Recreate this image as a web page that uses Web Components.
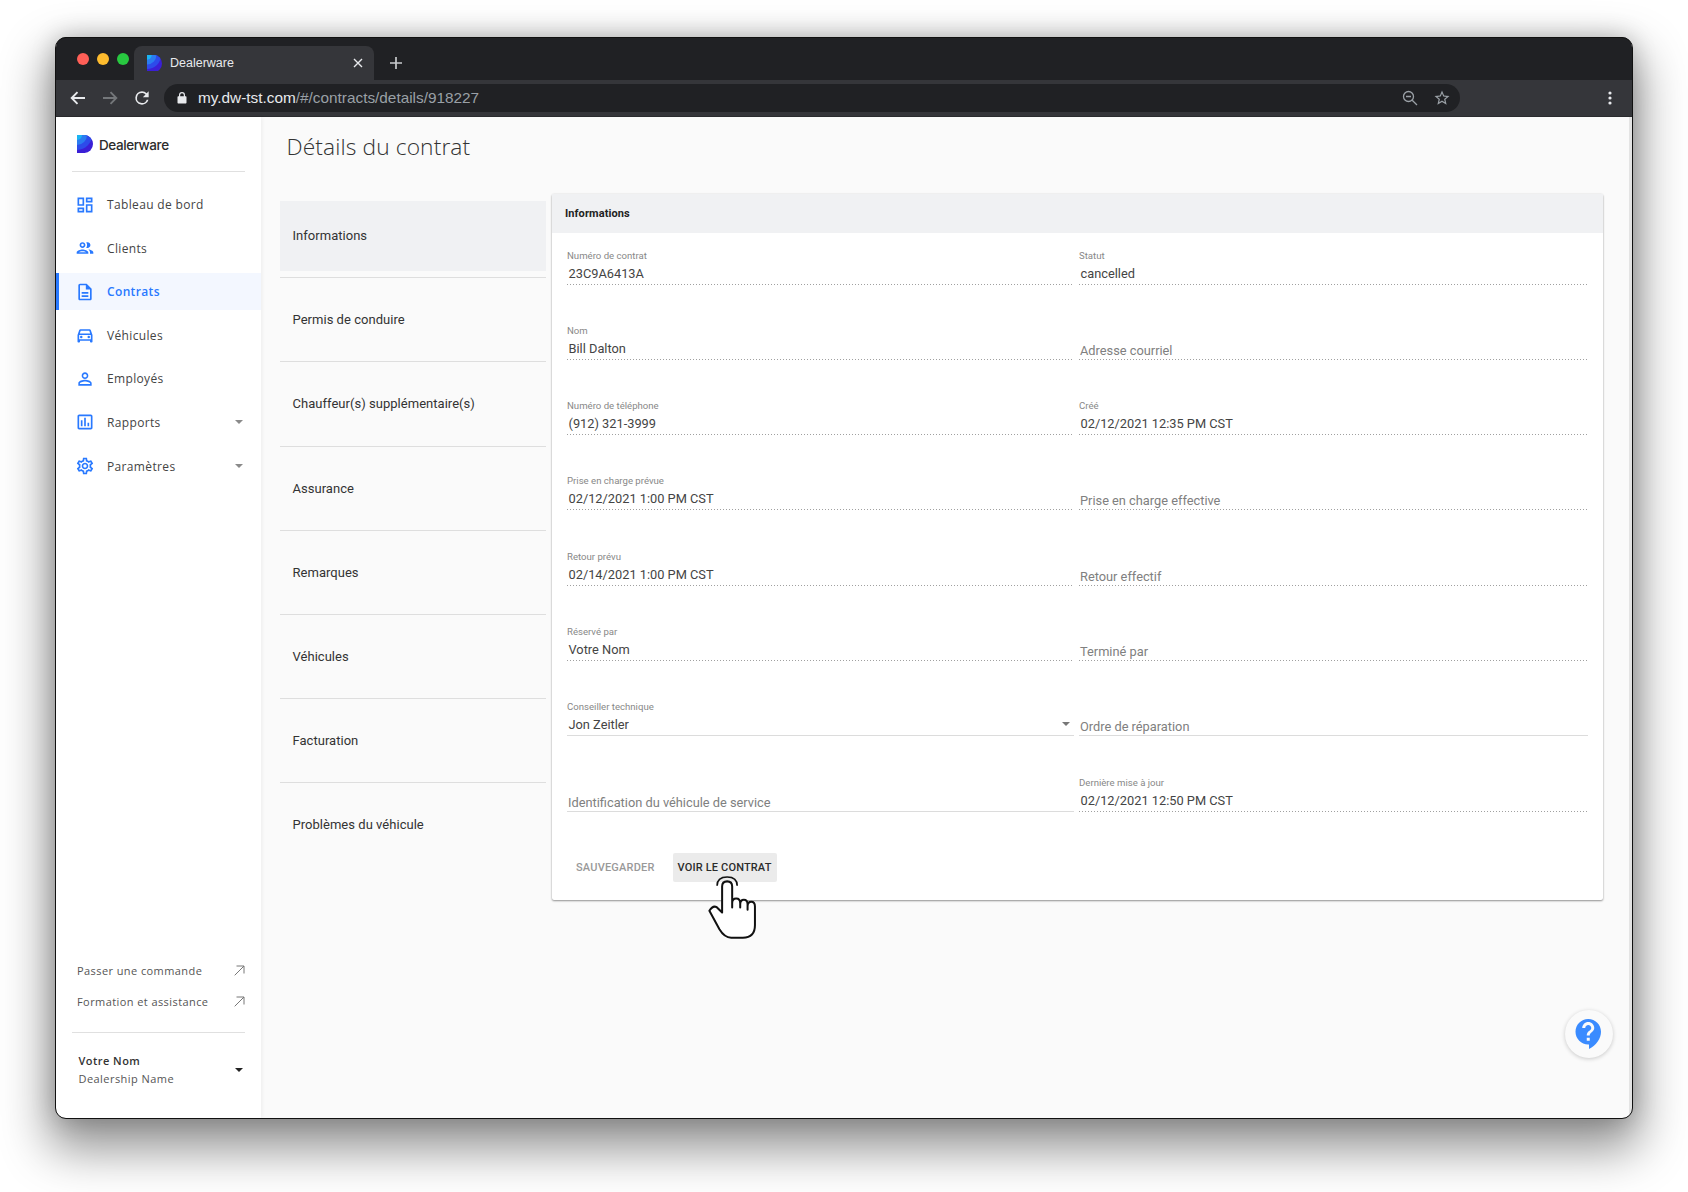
<!DOCTYPE html>
<html lang="fr">
<head>
<meta charset="utf-8">
<title>Dealerware</title>
<style>
  html, body { margin: 0; background: #fff; }
  body { width: 1688px; height: 1192px; overflow: hidden; font-family: Roboto, sans-serif; }
</style>
</head>
<body>
<browser-frame>
  <app-sidebar slot="side"></app-sidebar>
  <contract-page slot="main"></contract-page>
</browser-frame>

<script>
const ICONS = {
  dashboard: '<path d="M19 5v2h-4V5h4M9 5v6H5V5h4m10 8v6h-4v-6h4M9 17v2H5v-2h4M21 3h-8v6h8V3zM11 3H3v10h8V3zm10 8h-8v10h8V11zm-10 4H3v6h8v-6z"/>',
  people: '<path d="M9 13.75c-2.34 0-7 1.17-7 3.5V19h14v-1.75c0-2.33-4.66-3.5-7-3.5zM4.34 17c.84-.58 2.87-1.25 4.66-1.25s3.82.67 4.66 1.25H4.34zM9 12c1.93 0 3.5-1.57 3.5-3.5S10.93 5 9 5 5.5 6.57 5.5 8.5 7.07 12 9 12zm0-5c.83 0 1.5.67 1.5 1.5S9.83 10 9 10s-1.5-.67-1.5-1.5S8.17 7 9 7zm7.04 6.81c1.16.84 1.96 1.96 1.96 3.44V19h4v-1.75c0-2.02-3.5-3.17-5.96-3.44zM15 12c1.93 0 3.5-1.57 3.5-3.5S16.93 5 15 5c-.54 0-1.04.13-1.5.35.63.89 1 1.98 1 3.15s-.37 2.26-1 3.15c.46.22.96.35 1.5.35z"/>',
  doc: '<path d="M8 16h8v2H8zm0-4h8v2H8zm6-10H6c-1.1 0-2 .9-2 2v16c0 1.1.89 2 1.99 2H18c1.1 0 2-.9 2-2V8l-6-6zm4 18H6V4h7v5h5v11z"/>',
  car: '<path d="M18.92 6.01C18.72 5.42 18.16 5 17.5 5h-11c-.66 0-1.21.42-1.42 1.01L3 12v8c0 .55.45 1 1 1h1c.55 0 1-.45 1-1v-1h12v1c0 .55.45 1 1 1h1c.55 0 1-.45 1-1v-8l-2.08-5.99zM6.85 7h10.29l1.08 3.11H5.77L6.85 7zM19 17H5v-5h14v5z"/><circle cx="7.5" cy="14.5" r="1.5"/><circle cx="16.5" cy="14.5" r="1.5"/>',
  person: '<path d="M12 5.9c1.16 0 2.1.94 2.1 2.1s-.94 2.1-2.1 2.1S9.9 9.16 9.9 8s.94-2.1 2.1-2.1m0 9c2.97 0 6.1 1.46 6.1 2.1v1.1H5.9V17c0-.64 3.13-2.1 6.1-2.1M12 4C9.79 4 8 5.79 8 8s1.79 4 4 4 4-1.79 4-4-1.79-4-4-4zm0 9c-2.67 0-8 1.34-8 4v3h16v-3c0-2.66-5.33-4-8-4z"/>',
  chart: '<path d="M19 3H5c-1.1 0-2 .9-2 2v14c0 1.1.9 2 2 2h14c1.1 0 2-.9 2-2V5c0-1.1-.9-2-2-2zm0 16H5V5h14v14zM7 10h2v7H7zm4-3h2v10h-2zm4 6h2v4h-2z"/>',
  gear: '<path d="M19.43 12.98c.04-.32.07-.64.07-.98 0-.34-.03-.66-.07-.98l2.11-1.65c.19-.15.24-.42.12-.64l-2-3.46c-.09-.16-.26-.25-.44-.25-.06 0-.12.01-.17.03l-2.49 1c-.52-.4-1.08-.73-1.69-.98l-.38-2.65C14.46 2.18 14.25 2 14 2h-4c-.25 0-.46.18-.49.42l-.38 2.65c-.61.25-1.17.59-1.69.98l-2.49-1c-.06-.02-.12-.03-.18-.03-.17 0-.34.09-.43.25l-2 3.46c-.13.22-.07.49.12.64l2.11 1.65c-.04.32-.07.65-.07.98 0 .33.03.66.07.98l-2.11 1.65c-.19.15-.24.42-.12.64l2 3.46c.09.16.26.25.44.25.06 0 .12-.01.17-.03l2.49-1c.52.4 1.08.73 1.69.98l.38 2.65c.03.24.24.42.49.42h4c.25 0 .46-.18.49-.42l.38-2.65c.61-.25 1.17-.59 1.69-.98l2.49 1c.06.02.12.03.18.03.17 0 .34-.09.43-.25l2-3.46c.12-.22.07-.49-.12-.64l-2.11-1.65zm-1.98-1.71c.04.31.05.52.05.73 0 .21-.02.43-.05.73l-.14 1.13.89.7 1.08.84-.7 1.21-1.27-.51-1.04-.42-.9.68c-.43.32-.84.56-1.25.73l-1.06.43-.16 1.13-.2 1.35h-1.4l-.19-1.35-.16-1.13-1.06-.43c-.43-.18-.83-.41-1.23-.71l-.91-.7-1.06.43-1.27.51-.7-1.21 1.08-.84.89-.7-.14-1.13c-.03-.31-.05-.54-.05-.74s.02-.43.05-.73l.14-1.13-.89-.7-1.08-.84.7-1.21 1.27.51 1.04.42.9-.68c.43-.32.84-.56 1.25-.73l1.06-.43.16-1.13.2-1.35h1.39l.19 1.35.16 1.13 1.06.43c.43.18.83.41 1.23.71l.91.7 1.06-.43 1.27-.51.7 1.21-1.07.85-.89.7.14 1.13zM12 8c-2.21 0-4 1.79-4 4s1.79 4 4 4 4-1.79 4-4-1.79-4-4-4zm0 6c-1.1 0-2-.9-2-2s.9-2 2-2 2 .9 2 2-.9 2-2 2z"/>'
};

const logo = (id, size) => `
  <svg width="${size}" height="${size * 18 / 16}" viewBox="0 0 16 18">
    <defs><clipPath id="${id}"><path d="M0 0h7.5a8.5 9 0 0 1 0 18H0z"/></clipPath></defs>
    <g clip-path="url(#${id})">
      <rect width="16" height="18" fill="#3a1fd6"/>
      <circle cx="0" cy="0" r="15" fill="#2d4bea"/>
      <circle cx="0" cy="0" r="10" fill="#2b7cf0"/>
      <circle cx="0" cy="0" r="5" fill="#1bb4f2"/>
    </g>
  </svg>`;

class BrowserFrame extends HTMLElement {
  constructor() {
    super();
    this.attachShadow({ mode: "open" }).innerHTML = `
      <style>
        :host { display: block; box-sizing: border-box; width: 1688px; height: 1192px; padding: 37px 56px 74px; }
        .win { height: 100%; display: flex; flex-direction: column; border-radius: 10px; overflow: hidden; }
        .shadow { position: relative; height: 100%; border-radius: 10px; box-shadow: 0 24px 48px 8px rgba(0,0,0,.42), 0 0 24px rgba(0,0,0,.22); }
        .shadow::after { content: ""; position: absolute; inset: 0 -1px -1px -1px; border: 1px solid #111; border-radius: 11px; pointer-events: none; z-index: 5; }
        .strip { height: 43px; flex: none; background: #202124; display: flex; align-items: flex-end; padding-left: 21px; }
        .lights { display: flex; gap: 8px; align-self: flex-start; margin-top: 16px; }
        .lights i { width: 12px; height: 12px; border-radius: 50%; }
        .tab { position: relative; width: 240px; height: 34px; margin-left: 5px; background: #35363a; border-radius: 8px 8px 0 0;
               display: flex; align-items: center; padding-left: 13px; box-sizing: border-box; color: #e8eaed;
               font: 12.5px "Liberation Sans", sans-serif; }
        .tab span { margin-left: 8px; flex: 1; }
        .tab svg.x { margin-right: 11px; }
        .plus { margin: 0 0 10px 15px; }
        .bar { height: 37px; flex: none; background: #35363a; display: flex; align-items: center; box-sizing: border-box; border-bottom: 1px solid #2a2b2e; }
        .nav { width: 108px; display: flex; align-items: center; gap: 14px; padding-left: 13px; box-sizing: border-box; }
        .nav svg:last-child { margin-left: -1px; }
        .omni { width: 1296px; height: 28px; background: #202124; border-radius: 14px; display: flex; align-items: center;
                padding-left: 13px; box-sizing: border-box; font: 15.35px "Liberation Sans", sans-serif; color: #9aa0a6; }
        .omni b { font-weight: 400; color: #e8eaed; }
        .url { margin-left: 11px; flex: 1; }
        .omni svg.z { margin-right: 15px; }
        .omni svg.s { margin-right: 9px; }
        .dots { margin-left: 148px; }
        .body { flex: 1; min-height: 0; display: flex; background: #fafafa; position: relative; }
        ::slotted([slot=main]) { flex: 1; min-width: 0; }
      </style>
      <div class="shadow"><div class="win">
        <div class="strip">
          <div class="lights"><i style="background:#ff5f57"></i><i style="background:#febc2e"></i><i style="background:#28c840"></i></div>
          <div class="tab">
            ${logo("favclip", 15)}
            <span>Dealerware</span>
            <svg class="x" width="10" height="10" viewBox="0 0 10 10"><path d="M1 1l8 8M9 1l-8 8" stroke="#e8eaed" stroke-width="1.4"/></svg>
          </div>
          <svg class="plus" width="14" height="14" viewBox="0 0 14 14"><path d="M7 1v12M1 7h12" stroke="#c8cacd" stroke-width="1.7"/></svg>
        </div>
        <div class="bar">
          <div class="nav">
            <svg width="18" height="18" viewBox="0 0 18 18"><path d="M16 9H3M8.5 3.2L2.7 9l5.8 5.8" fill="none" stroke="#e8eaed" stroke-width="1.9"/></svg>
            <svg width="18" height="18" viewBox="0 0 18 18"><path d="M2 9h13M9.5 3.2L15.3 9l-5.8 5.8" fill="none" stroke="#74777a" stroke-width="1.9"/></svg>
            <svg width="20" height="20" viewBox="0 0 24 24"><path fill="#e8eaed" d="M17.65 6.35A7.96 7.96 0 0 0 12 4a8 8 0 1 0 7.73 10h-2.08A6 6 0 1 1 12 6c1.66 0 3.14.69 4.22 1.78L13 11h7V4l-2.35 2.35z"/></svg>
          </div>
          <div class="omni">
            <svg width="10" height="12" viewBox="0 0 10 12"><path fill="#e8eaed" d="M8.5 4.2H8V3a3 3 0 0 0-6 0v1.2h-.5C.9 4.2.5 4.6.5 5.2v5.3c0 .6.4 1 1 1h7c.6 0 1-.4 1-1V5.2c0-.6-.4-1-1-1zM3.2 4.2V3a1.8 1.8 0 0 1 3.6 0v1.2z"/></svg>
            <div class="url"><b>my.dw-tst.com</b>/#/contracts/details/918227</div>
            <svg class="z" width="16" height="16" viewBox="0 0 16 16"><circle cx="6.5" cy="6.5" r="5" fill="none" stroke="#9aa0a6" stroke-width="1.3"/><path d="M4 6.5h5M10.2 10.2L15 15" stroke="#9aa0a6" stroke-width="1.3"/></svg>
            <svg class="s" width="18" height="18" viewBox="0 0 24 24"><path fill="#9aa0a6" d="M22 9.24l-7.19-.62L12 2 9.19 8.63 2 9.24l5.46 4.73L5.82 21 12 17.27 18.18 21l-1.63-7.03L22 9.24zM12 15.4l-3.76 2.27 1-4.28-3.32-2.88 4.38-.38L12 6.1l1.71 4.04 4.38.38-3.32 2.88 1 4.28L12 15.4z"/></svg>
          </div>
          <svg class="dots" width="4" height="14" viewBox="0 0 4 14"><circle cx="2" cy="2" r="1.6" fill="#e8eaed"/><circle cx="2" cy="7" r="1.6" fill="#e8eaed"/><circle cx="2" cy="12" r="1.6" fill="#e8eaed"/></svg>
        </div>
        <div class="body"><slot name="side"></slot><slot name="main"></slot></div>
      </div></div>`;
  }
}
customElements.define("browser-frame", BrowserFrame);

class NavItem extends HTMLElement {
  constructor() {
    super();
    this.attachShadow({ mode: "open" });
  }
  connectedCallback() {
    const active = this.hasAttribute("active");
    this.shadowRoot.innerHTML = `
      <style>
        :host { display: flex; align-items: center; height: 37px; position: relative; box-sizing: border-box; padding-left: 18.5px;
                font: 12px "Open Sans", sans-serif; letter-spacing: .35px; color: ${active ? "#2979ff" : "#444"};
                background: ${active ? "#f3f7ff" : "transparent"}; font-weight: ${active ? 600 : 400}; }
        svg.i { width: 20px; height: 20px; fill: #2979ff; margin-right: 12.5px; flex: none; }
        .bar { position: absolute; left: 0; top: 0; bottom: 0; width: 3px; background: #2979ff; }
        .caret { margin-left: auto; margin-right: 18px; width: 0; height: 0; border: 4px solid transparent; border-top: 4px solid #8a8a8a; border-bottom: 0; }
      </style>
      ${active ? '<div class="bar"></div>' : ""}
      <svg class="i" viewBox="0 0 24 24">${ICONS[this.getAttribute("icon")]}</svg>
      <slot></slot>
      ${this.hasAttribute("caret") ? '<div class="caret"></div>' : ""}`;
  }
}
customElements.define("nav-item", NavItem);

class ExtLink extends HTMLElement {
  constructor() {
    super();
    this.attachShadow({ mode: "open" }).innerHTML = `
      <style>
        :host { display: flex; align-items: center; justify-content: space-between; height: 31px; padding: 0 16px 0 21px;
                font: 11px "Open Sans", sans-serif; letter-spacing: .42px; color: #555; }
      </style>
      <slot></slot>
      <svg width="11" height="11" viewBox="0 0 11 11"><path d="M.7 10.3L10 1M2.5 1H10v7.5" fill="none" stroke="#777" stroke-width="1"/></svg>`;
  }
}
customElements.define("ext-link", ExtLink);

class AppSidebar extends HTMLElement {
  constructor() {
    super();
    this.attachShadow({ mode: "open" }).innerHTML = `
      <style>
        :host { display: flex; flex-direction: column; flex: none; width: 205px; background: #fff; box-shadow: 1px 0 4px rgba(0,0,0,.06); z-index: 1; box-sizing: border-box; }
        .brand { height: 54px; margin: 0 16px; border-bottom: 1px solid #e0e0e0; display: flex; align-items: center; padding: 0 5px; gap: 6px; margin-bottom: 14px; }
        .brand span { font: 500 13.5px Inter, sans-serif; letter-spacing: -.42px; color: #2c2c2c; padding-top: 1px; }
        nav { display: flex; flex-direction: column; gap: 6.6px; }
        .foot { margin-top: auto; }
        hr { border: 0; border-top: 1px solid #e0e0e0; margin: 15px 16px 0; }
        .user { display: flex; align-items: flex-start; justify-content: space-between; padding: 19px 18px 0 22.5px; height: 85px; box-sizing: border-box;
                font: 11px/18px "Open Sans", sans-serif; letter-spacing: .45px; color: #555; }
        .user b { display: block; font-weight: 600; color: #333; }
        .user i { width: 0; height: 0; border: 4px solid transparent; border-top: 4px solid #222; border-bottom: 0; margin-top: 16px; }
      </style>
      <div class="brand">${logo("brandclip", 16)}<span>Dealerware</span></div>
      <nav>
        <nav-item icon="dashboard">Tableau de bord</nav-item>
        <nav-item icon="people">Clients</nav-item>
        <nav-item icon="doc" active>Contrats</nav-item>
        <nav-item icon="car">Véhicules</nav-item>
        <nav-item icon="person">Employés</nav-item>
        <nav-item icon="chart" caret>Rapports</nav-item>
        <nav-item icon="gear" caret>Paramètres</nav-item>
      </nav>
      <div class="foot">
        <ext-link>Passer une commande</ext-link>
        <ext-link>Formation et assistance</ext-link>
        <hr>
        <div class="user"><div><b>Votre Nom</b>Dealership Name</div><i></i></div>
      </div>`;
  }
}
customElements.define("app-sidebar", AppSidebar);

class SideTab extends HTMLElement {
  constructor() {
    super();
    this.attachShadow({ mode: "open" }).innerHTML = `
      <style>
        :host { display: block; height: 84.2px; box-sizing: border-box; font: 13px Roboto, sans-serif; letter-spacing: .03px; color: #333; }
        :host([first]) { height: 77.2px; }
        .in { height: 70px; box-sizing: border-box; display: flex; align-items: center; padding-left: 12.5px; }
        :host([first]) .in { padding-bottom: 2px; }
        :host(:not([first])) .in { height: 83.2px; }
        :host([selected]) .in { background: #f0f1f3; }
        .line { height: 1px; background: #dedede; }
        :host([first]) .line { margin-top: 6px; }
        :host([last]) .line { display: none; }
      </style>
      <div class="in"><slot></slot></div>
      <div class="line"></div>`;
  }
}
customElements.define("side-tab", SideTab);

class FormField extends HTMLElement {
  constructor() {
    super();
    this.attachShadow({ mode: "open" });
  }
  connectedCallback() {
    const label = this.getAttribute("label");
    const line = this.hasAttribute("solid")
      ? "border-bottom: 1px solid #dcdcdc;"
      : "padding-bottom: 1px; background: linear-gradient(90deg, #a0a0a0 1px, transparent 1px) left bottom / 3px 1px repeat-x;";
    this.shadowRoot.innerHTML = `
      <style>
        :host { display: flex; flex-direction: column; justify-content: flex-end; position: relative; box-sizing: border-box;
                ${line} font-family: Roboto, sans-serif; }
        .lab { font-size: 9.6px; line-height: 12px; color: #888; margin-bottom: 4px; }
        .val { font-size: 12.8px; line-height: 15px; color: #444; padding: 0 0 3px 1.5px; min-height: 15px; }
        .ph { font-size: 12.8px; line-height: 15px; color: #808080; padding: 0 0 1px 1px; }
        .car { position: absolute; right: 4px; bottom: 9px; width: 0; height: 0; border: 4px solid transparent; border-top: 4px solid #777; border-bottom: 0; }
      </style>
      ${label ? `<div class="lab">${label}</div><div class="val"><slot></slot></div>`
              : `<div class="ph">${this.getAttribute("placeholder")}</div>`}
      ${this.hasAttribute("select") ? '<div class="car"></div>' : ""}`;
  }
}
customElements.define("form-field", FormField);

class PointerHand extends HTMLElement {
  constructor() {
    super();
    this.attachShadow({ mode: "open" }).innerHTML = `
      <style>:host { position: absolute; left: 33px; top: 21px; width: 52px; height: 67px; display: block; z-index: 3; }</style>
      <svg width="52" height="67" viewBox="500 285 155 200">
        <path d="M548 400V322Q548 307 563 307Q578 307 578 322V385V372Q578 358 590 358Q602 358 602 372V385V376Q602 362 613 362Q624 362 624 376V392V382Q624 368 635 368Q646 368 646 382V438Q646 475 610 475H575Q555 475 540 450L510 395Q520 378 532 384Z"
              fill="#fff" stroke="#111" stroke-width="6" stroke-linejoin="round"/>
        <path d="M533 320Q533 294 563 294Q593 294 593 320" fill="none" stroke="#111" stroke-width="5"/>
      </svg>`;
  }
}
customElements.define("pointer-hand", PointerHand);

class ContractPage extends HTMLElement {
  constructor() {
    super();
    this.attachShadow({ mode: "open" }).innerHTML = `
      <style>
        :host { display: block; position: relative; box-sizing: border-box; padding: 0 26px 0 19px; background: #fafafa; border-right: 3px solid #e4e4e4; }
        h1 { margin: 0; padding: 13px 0 0 6.5px; height: 77px; box-sizing: border-box; font: 300 22.8px/34px "Open Sans", sans-serif; color: #333; letter-spacing: .1px; }
        .cols { display: flex; gap: 6px; align-items: flex-start; }
        .tabs { width: 266px; flex: none; padding-top: 7px; }
        .card { flex: 1; min-width: 0; background: #fff; border-radius: 2px; box-shadow: 0 1px 2px rgba(0,0,0,.4), 0 0 2px rgba(0,0,0,.1); height: 706px; }
        .head { height: 39px; background: #f0f1f3; padding-left: 13px; display: flex; align-items: center; font: 700 11px Roboto, sans-serif; letter-spacing: .1px; color: #222; }
        .grid { display: grid; grid-template-columns: 506.5px 1fr; column-gap: 5.5px; grid-template-rows: 51.5px repeat(7, 75.3px); padding: 0 15px 0 15px; }
        .btns { display: flex; position: relative; gap: 13px; margin: 41px 0 0 15px; height: 29px; font: 500 11px Roboto, sans-serif; align-items: center; }
        .btns div { padding: 0 5px; height: 29px; display: flex; align-items: center; border-radius: 2px; }
        .save { color: #999; margin-left: 4px; letter-spacing: .2px; }
        .view { color: #2b2b2b; background: #ebebeb; position: relative; letter-spacing: .15px; }
        .help { position: absolute; left: 1304px; top: 893px; width: 48px; height: 48px; border-radius: 50%; background: #fafafa; box-shadow: 0 1px 4px rgba(0,0,0,.2);
                display: flex; align-items: center; justify-content: center; }
      </style>
      <h1>Détails du contrat</h1>
      <div class="cols">
        <div class="tabs">
          <side-tab first selected>Informations</side-tab>
          <side-tab>Permis de conduire</side-tab>
          <side-tab>Chauffeur(s) supplémentaire(s)</side-tab>
          <side-tab>Assurance</side-tab>
          <side-tab>Remarques</side-tab>
          <side-tab>Véhicules</side-tab>
          <side-tab>Facturation</side-tab>
          <side-tab last>Problèmes du véhicule</side-tab>
        </div>
        <div class="card">
          <div class="head">Informations</div>
          <div class="grid">
            <form-field label="Numéro de contrat">23C9A6413A</form-field>
            <form-field label="Statut">cancelled</form-field>
            <form-field label="Nom">Bill Dalton</form-field>
            <form-field placeholder="Adresse courriel"></form-field>
            <form-field label="Numéro de téléphone">(912) 321-3999</form-field>
            <form-field label="Créé">02/12/2021 12:35 PM CST</form-field>
            <form-field label="Prise en charge prévue">02/12/2021 1:00 PM CST</form-field>
            <form-field placeholder="Prise en charge effective"></form-field>
            <form-field label="Retour prévu">02/14/2021 1:00 PM CST</form-field>
            <form-field placeholder="Retour effectif"></form-field>
            <form-field label="Réservé par">Votre Nom</form-field>
            <form-field placeholder="Terminé par"></form-field>
            <form-field label="Conseiller technique" solid select>Jon Zeitler</form-field>
            <form-field placeholder="Ordre de réparation" solid></form-field>
            <form-field placeholder="Identification du véhicule de service" solid></form-field>
            <form-field label="Dernière mise à jour">02/12/2021 12:50 PM CST</form-field>
          </div>
          <div class="btns">
            <div class="save">SAUVEGARDER</div>
            <div class="view">VOIR LE CONTRAT<pointer-hand></pointer-hand></div>
          </div>
        </div>
      </div>
      <div class="help">
        <svg width="36" height="36" viewBox="0 0 24 24"><path fill="#3a8bff" d="M11.5 2C6.81 2 3 5.81 3 10.5S6.81 19 11.5 19h.5v3c4.86-2.34 8-7 8-11.5C20 5.81 16.19 2 11.5 2zm1 14.5h-2v-2h2v2zm0-3.5h-2c0-3.25 3-3 3-5 0-1.1-.9-2-2-2s-2 .9-2 2h-2c0-2.21 1.79-4 4-4s4 1.79 4 4c0 2.5-3 2.75-3 5z"/></svg>
      </div>`;
  }
}
customElements.define("contract-page", ContractPage);
</script>
</body>
</html>
